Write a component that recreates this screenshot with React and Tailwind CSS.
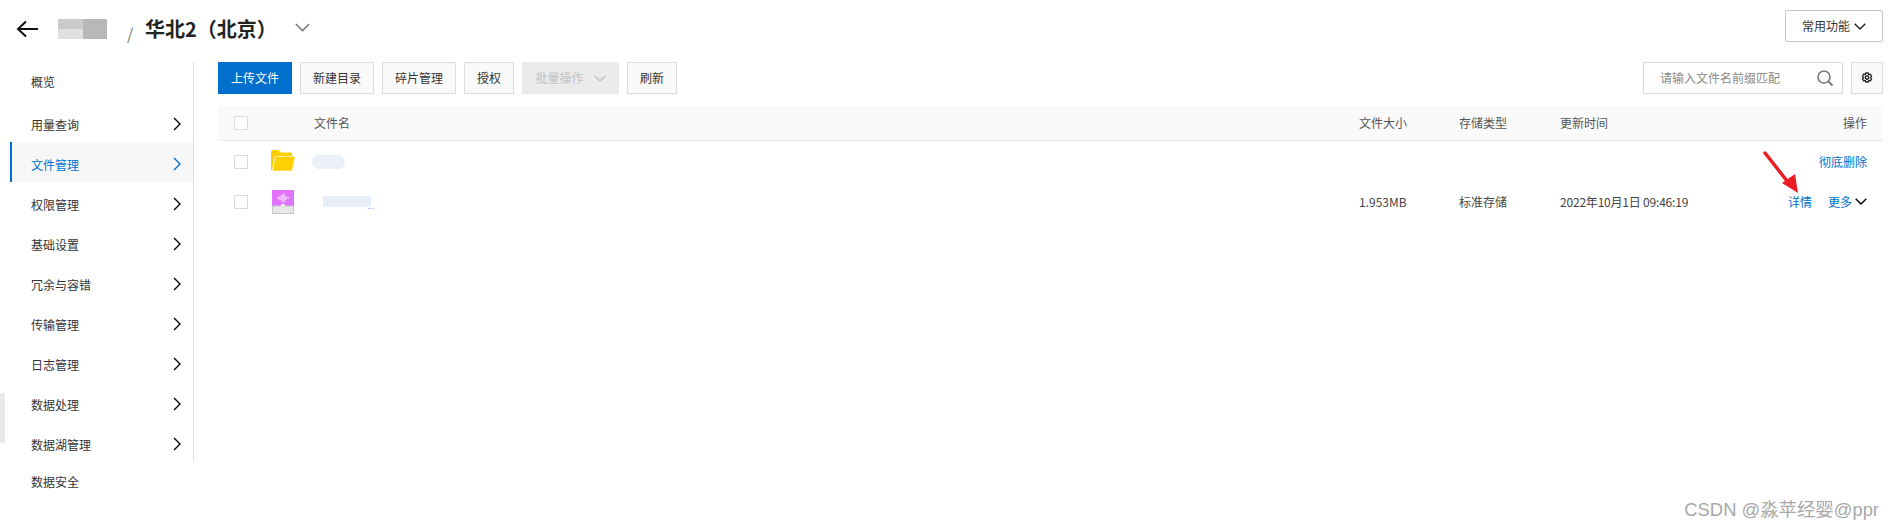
function Chevron({ className = "", w = 8, h = 14, sw = 1.4 }) {
  return (
    <svg width={w} height={h} viewBox="0 0 8 14" fill="none" className={className}>
      <path d="M1 1l6 6-6 6" stroke="currentColor" strokeWidth={sw} />
    </svg>
  );
}

function Down({ className = "", w = 12, h = 7, sw = 1.4 }) {
  return (
    <svg width={w} height={h} viewBox="0 0 12 7" fill="none" className={className}>
      <path d="M.7.7L6 6l5.3-5.3" stroke="currentColor" strokeWidth={sw} />
    </svg>
  );
}

function SideItem({ label, active, chevron = true }) {
  const pad = chevron ? " pt-1.5" : "";
  return (
    <div
      className={
        active
          ? "ml-[10px] flex h-10 items-center justify-between border-l-2 border-[#0070cc] bg-[#f7f7f7] pl-[19px] pr-[12px] text-[#0070cc]" + pad
          : "flex h-10 items-center justify-between pl-[31px] pr-[12px] text-[#333]" + pad
      }
    >
      <span>{label}</span>
      {chevron && <Chevron className={active ? "-mt-[3px] text-[#0070cc]" : "-mt-[3px] text-black"} />}
    </div>
  );
}

function Btn({ children, primary, disabled, wide }) {
  const base = "flex h-8 items-center justify-center text-xs ";
  if (primary) return <div className={base + "w-[74px] bg-[#0070cc] text-white"}>{children}</div>;
  if (disabled) return <div className={base + "w-[97px] gap-[10px] bg-[#ebebeb] text-[#c1c1c1]"}>{children}</div>;
  return (
    <div className={base + (wide ? "w-[74px]" : "w-[50px]") + " border border-[#dcdcdc] bg-[#fafafa] text-[#333]"}>
      {children}
    </div>
  );
}

function Checkbox() {
  return <div className="h-[14px] w-[14px] border border-[#dcdcdc] bg-white" />;
}

const rowGrid = "grid grid-cols-[37px_43px_1045px_100px_101px_1fr_auto] items-center pl-4 pr-4";

export default function App() {
  return (
    <div className="relative h-[529px] w-[1894px] overflow-hidden bg-white font-['Noto_Sans_CJK_SC','Noto_Sans',sans-serif] text-xs text-[#333]">
      {/* header */}
      <header className="flex h-[62px] items-start justify-between pr-[11px]">
        <div className="flex h-[58px] items-center pl-4 text-black">
          <svg width="23" height="18" viewBox="0 0 23 18" fill="none">
            <path d="M22 9H2M10 1.5L2 9l8 7.5" stroke="#111" strokeWidth="2" />
          </svg>
          <div className="ml-[19px] grid h-5 w-[49px] grid-cols-2 grid-rows-2">
            <div className="bg-[#cbcbcb]" />
            <div className="row-span-2 bg-[#b9b8b8]" />
            <div className="bg-[#e2e0de]" />
          </div>
          <div className="ml-[20px] mt-2 w-[18px] text-[16px] leading-none text-[#777]">/</div>
          <h1 className="text-[20px] font-bold leading-7 text-[#222]">华北2（北京）</h1>
          <Down className="ml-[18px] -mt-1 text-[#777]" w={15} h={9} sw={1.2} />
        </div>
        <div className="mt-[10px] flex h-[32px] w-[98px] items-center justify-center gap-1 rounded-[2px] border border-[#c4c6cf] text-[#333]">
          <span>常用功能</span>
          <Down className="text-[#222]" />
        </div>
      </header>

      <div className="flex items-start">
        {/* sidebar */}
        <aside className="w-[194px] shrink-0">
          <nav className="h-[400px] border-r border-[#e0e0e0]">
            <SideItem label="概览" chevron={false} />
            <SideItem label="用量查询" />
            <SideItem label="文件管理" active />
            <SideItem label="权限管理" />
            <SideItem label="基础设置" />
            <SideItem label="冗余与容错" />
            <SideItem label="传输管理" />
            <SideItem label="日志管理" />
            <SideItem label="数据处理" />
            <SideItem label="数据湖管理" />
          </nav>
          <div className="pl-[31px] pt-3 text-[#333]">数据安全</div>
        </aside>

        {/* main */}
        <main className="ml-6 w-[1665px]">
          <div className="flex items-center justify-between">
            <div className="flex items-center gap-2">
              <Btn primary>上传文件</Btn>
              <Btn wide>新建目录</Btn>
              <Btn wide>碎片管理</Btn>
              <Btn>授权</Btn>
              <Btn disabled>
                <span>批量操作</span>
                <Down className="text-[#c1c1c1]" />
              </Btn>
              <Btn>刷新</Btn>
            </div>
            <div className="flex items-center gap-2">
              <div className="flex h-8 w-[200px] items-center justify-between border border-[#dcdcdc] pl-4 pr-2 text-[#8a8a8a]">
                <span>请输入文件名前缀匹配</span>
                <svg width="18" height="18" viewBox="0 0 18 18" fill="none">
                  <circle cx="8" cy="8" r="6" stroke="#777" strokeWidth="1.6" />
                  <path d="M12.5 12.5L16.5 16.5" stroke="#777" strokeWidth="1.8" />
                </svg>
              </div>
              <div className="flex h-8 w-8 items-center justify-center border border-[#dcdcdc] bg-[#fafafa]">
                <svg width="12" height="13" viewBox="0 0 24 26" fill="none" stroke="#222" strokeWidth="2.6" strokeLinejoin="round">
                  <path d="M9.500 2h5l1 3.200 3.200-.9 2.500 4.200-2.300 2.500 2.300 2.500-2.500 4.200-3.200-.9-1 3.200h-5l-1-3.200-3.200.9-2.500-4.200 2.300-2.500-2.300-2.500 2.500-4.200 3.200.9z" />
                  <circle cx="12" cy="11" r="3.500" />
                </svg>
              </div>
            </div>
          </div>

          {/* table */}
          <div className={rowGrid + " mt-3 h-[35px] border-b border-[#ebebeb] bg-[#fafafa] text-[#555]"}>
            <Checkbox />
            <span />
            <span>文件名</span>
            <span>文件大小</span>
            <span>存储类型</span>
            <span>更新时间</span>
            <span>操作</span>
          </div>

          <div className={rowGrid + " h-[41px]"}>
            <Checkbox />
            <svg width="24" height="21" viewBox="0 0 24 21" className="-mt-[3px]">
              <path d="M0 2a2 2 0 012-2h5l3 2.500h10a1 1 0 011 1V6H4L1 20H0z" fill="#ffcf00" />
              <path d="M4.500 6.500H24L21 21H1.500z" fill="#ffcf00" stroke="#fff2b0" strokeWidth=".8" />
            </svg>
            <div className="-ml-[2px] h-[14px] w-[33px] rounded-full bg-[#ebf0f8]" />
            <span />
            <span />
            <span />
            <span className="text-[#0070cc]">彻底删除</span>
          </div>

          <div className={rowGrid + " h-[39px] text-[#444]"}>
            <Checkbox />
            <svg width="22" height="24" viewBox="0 0 22 24" className="ml-px">
              <rect width="22" height="16" fill="#df73ff" />
              <rect x=".5" y="16" width="21" height="7.500" fill="#e8e8e8" stroke="#c8c8c8" />
              <path d="M8 16l3-2.500 3 2.500z" fill="#f3f3f3" />
              <path d="M5 8h2M8 6v4M10 4.500v7M12 3.500v9M14 6v4M15.500 8h1.500" stroke="#fff" strokeWidth="1" />
            </svg>
            <div className="relative h-[11px] w-[48px] translate-x-[9px] bg-[#e8eef8]">
              <span className="absolute -bottom-[3px] right-[-3px] text-[8px] leading-none text-[#6f9ee6]">...</span>
            </div>
            <span>1.953MB</span>
            <span>标准存储</span>
            <span className="whitespace-nowrap tracking-[-0.2px]">2022年10月1日 09:46:19</span>
            <div className="flex items-center">
              <span className="text-[#0070cc]">详情</span>
              <span className="ml-4 text-[#0070cc]">更多</span>
              <Down className="ml-[3px] text-black" />
            </div>
          </div>
        </main>
      </div>

      {/* scrollbar-like tab at left edge */}
      <div className="absolute left-0 top-[393px] h-[50px] w-[5px] rounded-r-[2px] bg-[#e9e9e9]" />

      {/* red annotation arrow */}
      <svg className="absolute left-[1760px] top-[150px]" width="42" height="50" viewBox="0 0 42 50" fill="none">
        <path d="M5 3L31 36" stroke="#ea1c24" strokeWidth="3.500" strokeLinecap="round" />
        <path d="M38 43L22 33 35 24z" fill="#ea1c24" />
      </svg>

      {/* watermark */}
      <div className="absolute right-[15px] top-[497px] whitespace-nowrap font-['Liberation_Sans','Noto_Sans_CJK_SC',sans-serif] text-[18.4px] leading-[26px] text-[#a8a8a8]">CSDN @淼苹经婴@ppr</div>
    </div>
  );
}
